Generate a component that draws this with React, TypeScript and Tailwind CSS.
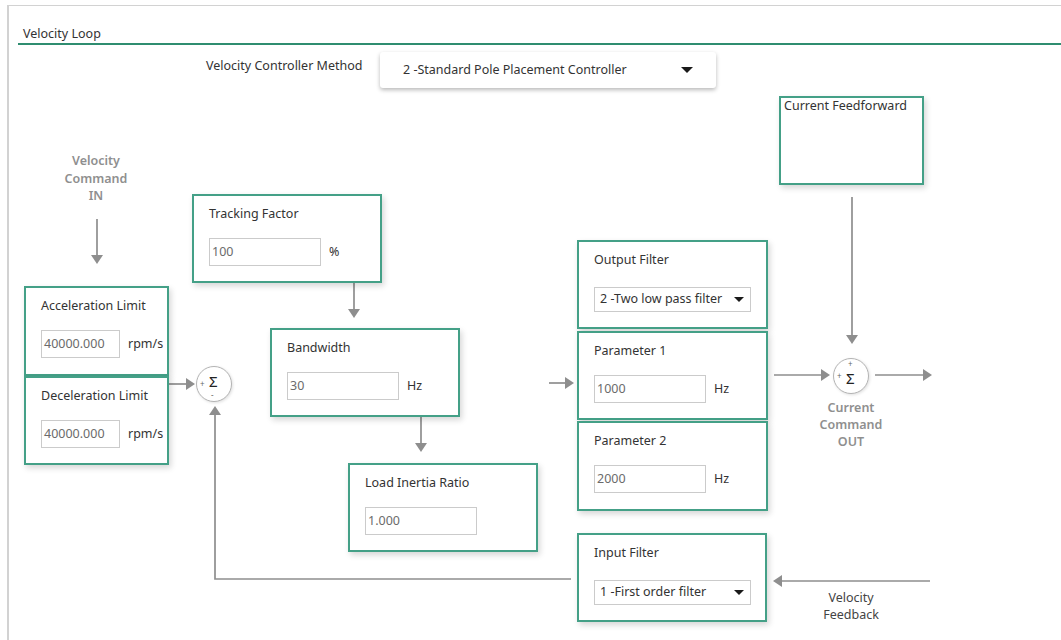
import type { ReactNode } from "react";

type Pt = [number, number];

// arrows in page coordinates (the svg viewBox is offset to match)
const ARROWS: Pt[][] = [
  [[96, 219], [96, 264]],
  [[168, 384], [194, 384]],
  [[570, 579], [214, 579], [214, 406]],
  [[353, 283], [353, 318]],
  [[420, 417], [420, 452]],
  [[548, 383], [573, 383]],
  [[773, 375], [829, 375]],
  [[851, 197], [851, 344]],
  [[874, 375], [931, 375]],
  [[929, 581], [772, 581]],
];

function Arrow({ pts }: { pts: Pt[] }) {
  const [tx, ty] = pts[pts.length - 1];
  const [px, py] = pts[pts.length - 2];
  const len = Math.hypot(tx - px, ty - py);
  const dx = (tx - px) / len;
  const dy = (ty - py) / len;
  const bx = tx - dx * 9;
  const by = ty - dy * 9;
  const nx = -dy;
  const ny = dx;
  const line = [...pts.slice(0, -1), [bx, by]].map((p) => p.join(",")).join(" ");
  return (
    <g>
      <polyline points={line} fill="none" stroke="#8e8e8e" strokeWidth={1.7} />
      <polygon
        points={`${tx},${ty} ${bx + nx * 6},${by + ny * 6} ${bx - nx * 6},${by - ny * 6}`}
        fill="#8e8e8e"
      />
    </g>
  );
}

function Block({ className, children }: { className: string; children?: ReactNode }) {
  return (
    <div
      className={`absolute border-2 border-[#44a087] bg-white shadow-[2px_3px_6px_rgba(0,0,0,0.16)] ${className}`}
    >
      {children}
    </div>
  );
}

function Field({
  label,
  value,
  unit,
  wide = true,
}: {
  label: string;
  value: string;
  unit?: string;
  wide?: boolean;
}) {
  return (
    <div className="flex flex-col pl-[15px] pt-[10px]">
      <span className="leading-[16px] text-[#333]">{label}</span>
      <div className="mt-[16px] flex items-center">
        <div
          className={`flex h-[28px] items-center border border-[#cbcbcb] pl-[2px] text-[#6b6b6b] ${
            wide ? "w-[112px]" : "w-[79px]"
          }`}
        >
          {value}
        </div>
        {unit && <span className="ml-[8px] text-[#333]">{unit}</span>}
      </div>
    </div>
  );
}

function Caret({ size = "sm" }: { size?: "sm" | "lg" }) {
  return (
    <span
      className={
        size === "lg"
          ? "h-0 w-0 border-x-[6px] border-t-[6px] border-x-transparent border-t-[#1a1a1a]"
          : "h-0 w-0 border-x-[5px] border-t-[5px] border-x-transparent border-t-[#1a1a1a]"
      }
    />
  );
}

function SelectField({ label, value }: { label: string; value: string }) {
  return (
    <div className="flex flex-col pl-[15px] pt-[10px]">
      <span className="leading-[16px] text-[#333]">{label}</span>
      <div className="mt-[19px] flex h-[25px] w-[157px] items-center justify-between border border-[#cbcbcb] pl-[5px] pr-[6px] text-[#333]">
        <span>{value}</span>
        <Caret />
      </div>
    </div>
  );
}

function Sum({ className, top }: { className: string; top?: boolean }) {
  return (
    <div
      className={`absolute h-[36px] w-[36px] rounded-full border-[1.5px] border-[#b4b4b4] bg-white shadow-[1px_1px_3px_rgba(0,0,0,0.12)] ${className}`}
    >
      <span className="absolute left-[3px] top-[12px] text-[8px] leading-[9px] text-[#666]">+</span>
      {top ? (
        <>
          <span className="absolute left-[14px] top-[1px] text-[8px] leading-[8px] text-[#666]">+</span>
          <span className="absolute left-[12px] top-[10px] text-[15px] leading-[18px] text-[#222]">Σ</span>
        </>
      ) : (
        <>
          <span className="absolute left-[12px] top-[5px] text-[15px] leading-[18px] text-[#222]">Σ</span>
          <span className="absolute left-[14px] top-[24px] text-[8px] leading-[7px] text-[#666]">-</span>
        </>
      )}
    </div>
  );
}

export default function App() {
  return (
    <div className="h-[640px] w-[1061px] overflow-hidden bg-white pl-[7px] pt-[5px] font-['Noto_Sans',sans-serif] text-[12.5px]">
      <div className="flex h-[635px] flex-col border-l-2 border-t border-[#d2d2d2]">
        {/* header */}
        <div className="ml-[9px] h-[39px] border-b-2 border-[#2f8d70] pl-[5px] pt-[20px] leading-[16px] text-[#333]">
          Velocity Loop
        </div>

        {/* diagram canvas, origin at page (9,45) */}
        <div className="relative flex-1">
          <div className="flex pl-[197px] pt-[7px]">
            <span className="mt-[6px] w-[174px] leading-[16px] text-[#333]">Velocity Controller Method</span>
            <div className="flex h-[36px] w-[336px] items-center justify-between rounded-[3px] bg-white pl-[23px] pr-[23px] text-[#333] shadow-[0_2px_4px_rgba(0,0,0,0.28)]">
              <span>2 -Standard Pole Placement Controller</span>
              <Caret size="lg" />
            </div>
          </div>

          <svg className="absolute inset-0 h-full w-full" viewBox="9 45 1050 595" fill="none">
            {ARROWS.map((pts, i) => (
              <Arrow key={i} pts={pts} />
            ))}
          </svg>

          <div className="absolute left-[37px] top-[107px] w-[100px] text-center font-semibold leading-[17.5px] text-[#8f8f8f]">
            Velocity
            <br />
            Command
            <br />
            IN
          </div>

          <Block className="left-[183px] top-[149px] h-[89px] w-[190px]">
            <Field label="Tracking Factor" value="100" unit="%" />
          </Block>

          <Block className="left-[15px] top-[241px] h-[90px] w-[145px]">
            <Field label="Acceleration Limit" value="40000.000" unit="rpm/s" wide={false} />
          </Block>
          <Block className="left-[15px] top-[331px] h-[89px] w-[145px]">
            <Field label="Deceleration Limit" value="40000.000" unit="rpm/s" wide={false} />
          </Block>

          <Sum className="left-[187px] top-[321px]" />

          <Block className="left-[261px] top-[283px] h-[89px] w-[190px]">
            <Field label="Bandwidth" value="30" unit="Hz" />
          </Block>

          <Block className="left-[339px] top-[418px] h-[89px] w-[190px]">
            <Field label="Load Inertia Ratio" value="1.000" />
          </Block>

          <Block className="left-[568px] top-[195px] h-[89px] w-[191px]">
            <SelectField label="Output Filter" value="2 -Two low pass filter" />
          </Block>
          <Block className="left-[568px] top-[286px] h-[89px] w-[191px]">
            <Field label="Parameter 1" value="1000" unit="Hz" />
          </Block>
          <Block className="left-[568px] top-[376px] h-[90px] w-[191px]">
            <Field label="Parameter 2" value="2000" unit="Hz" />
          </Block>

          <Block className="left-[568px] top-[488px] h-[89px] w-[190px]">
            <SelectField label="Input Filter" value="1 -First order filter" />
          </Block>

          <Block className="left-[770px] top-[51px] h-[89px] w-[145px]">
            <div className="pl-[3px] leading-[16px] text-[#333]">Current Feedforward</div>
          </Block>

          <Sum className="left-[824px] top-[313px]" top />

          <div className="absolute left-[792px] top-[354px] w-[100px] text-center font-semibold leading-[17px] text-[#8f8f8f]">
            Current
            <br />
            Command
            <br />
            OUT
          </div>

          <div className="absolute left-[792px] top-[544px] w-[100px] text-center leading-[17px] text-[#444]">
            Velocity
            <br />
            Feedback
          </div>
        </div>
      </div>
    </div>
  );
}
